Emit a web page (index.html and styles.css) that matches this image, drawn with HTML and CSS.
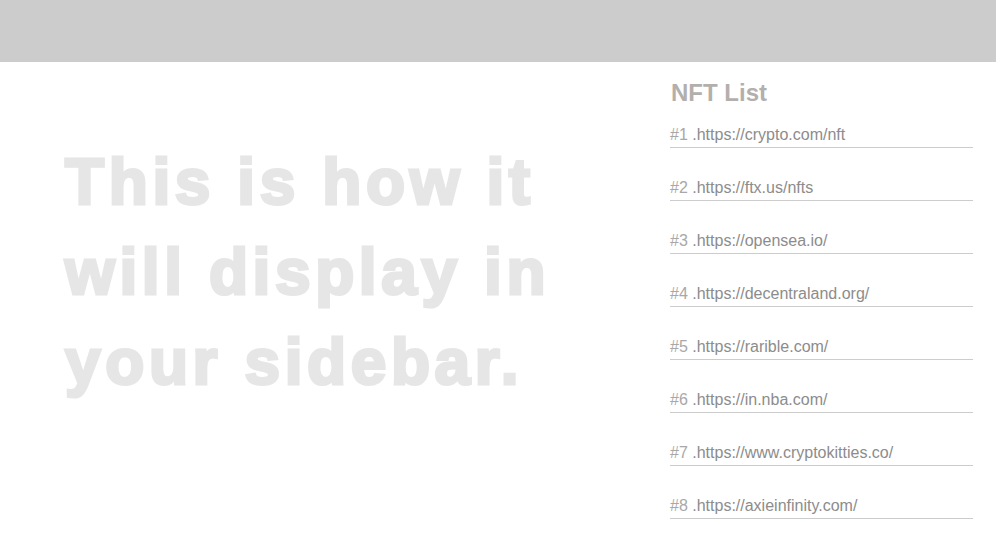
FILE: index.html
```html
<!DOCTYPE html>
<html>
<head>
<meta charset="utf-8">
<link rel="stylesheet" href="styles.css">
</head>
<body>
<header class="topbar"></header>
<main class="layout">
  <section class="preview">
    <h1 class="preview-text">This is how it will display in your sidebar.</h1>
  </section>
  <aside class="sidebar">
    <h2 class="sidebar-title">NFT List</h2>
    <ul class="nft-list">
      <li class="nft-item"><span class="num">#1</span> <a class="link">.https://crypto.com/nft</a></li>
      <li class="nft-item"><span class="num">#2</span> <a class="link">.https://ftx.us/nfts</a></li>
      <li class="nft-item"><span class="num">#3</span> <a class="link">.https://opensea.io/</a></li>
      <li class="nft-item"><span class="num">#4</span> <a class="link">.https://decentraland.org/</a></li>
      <li class="nft-item"><span class="num">#5</span> <a class="link">.https://rarible.com/</a></li>
      <li class="nft-item"><span class="num">#6</span> <a class="link">.https://in.nba.com/</a></li>
      <li class="nft-item"><span class="num">#7</span> <a class="link">.https://www.cryptokitties.co/</a></li>
      <li class="nft-item"><span class="num">#8</span> <a class="link">.https://axieinfinity.com/</a></li>
    </ul>
  </aside>
</main>
</body>
</html>
```

FILE: styles.css
```css
html, body {
  margin: 0;
  padding: 0;
  background: #ffffff;
  font-family: "Liberation Sans", Arial, sans-serif;
}
.topbar {
  height: 62px;
  background: #cccccc;
}
.layout {
  display: flex;
  justify-content: space-between;
}
.preview {
  padding: 75px 0 0 65px;
}
.preview-text {
  margin: 0;
  width: 500px;
  font-size: 64px;
  line-height: 90px;
  font-weight: 700;
  letter-spacing: 4.6px;
  color: #e6e6e6;
  -webkit-text-stroke: 3px #e6e6e6;
}
.sidebar {
  width: 303px;
  margin-right: 23px;
  padding-top: 17px;
}
.sidebar-title {
  margin: 0 0 18px 1px;
  font-size: 24px;
  line-height: 28px;
  font-weight: 700;
  color: #b3afad;
}
.nft-list {
  list-style: none;
  margin: 0;
  padding: 0;
}
.nft-item {
  font-size: 16px;
  line-height: 20px;
  padding-bottom: 2px;
  border-bottom: 1px solid #cccccc;
  margin-bottom: 30px;
}
.num {
  color: #a8a8a8;
}
.link {
  color: #8c8c8c;
}
```
